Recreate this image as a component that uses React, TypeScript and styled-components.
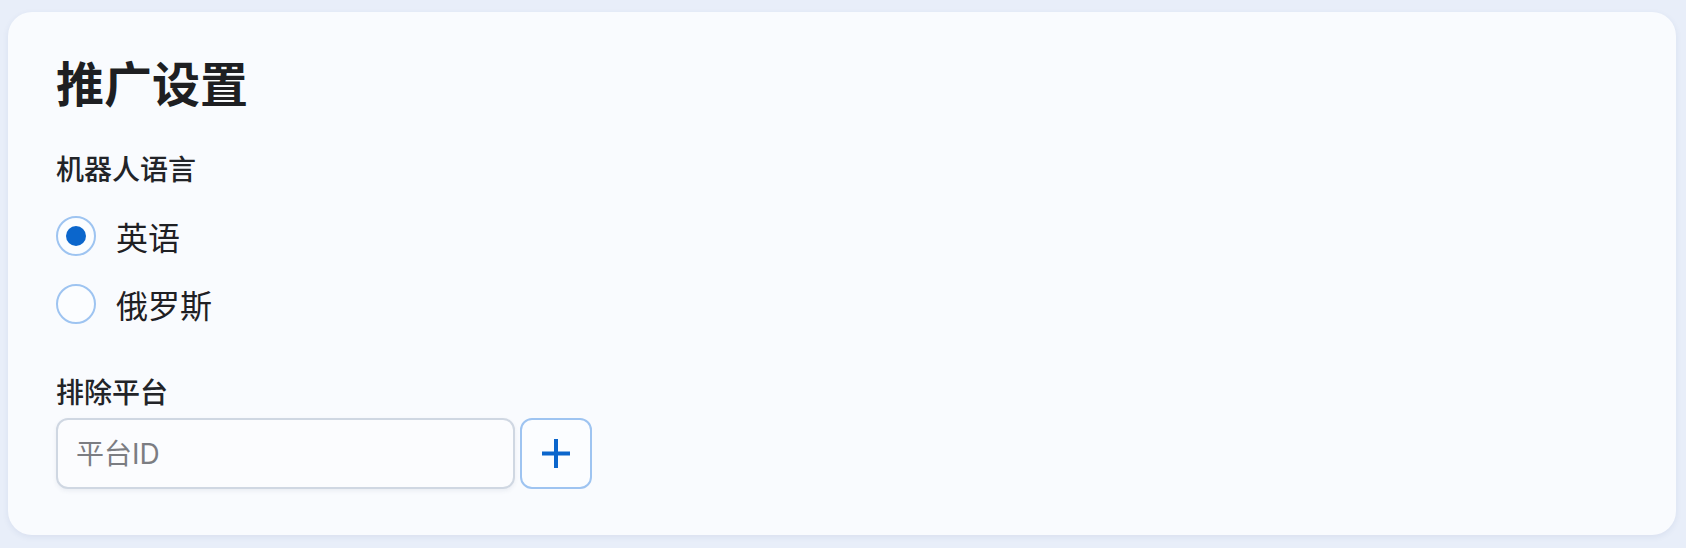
import React, { useState } from 'react'
import styled, { createGlobalStyle } from 'styled-components'

const GlobalStyle = createGlobalStyle`
  html, body {
    margin: 0;
    padding: 0;
    background: #e8eef9;
    font-family: "Noto Sans CJK SC", "Noto Sans", sans-serif;
  }
`

const Page = styled.div`
  padding: 12px 10px 13px 8px;
  min-height: 100vh;
  box-sizing: border-box;
`

const Card = styled.section`
  background: #f9fbfe;
  border-radius: 24px;
  padding: 40px 48px 46px;
  box-shadow: 0 2px 6px rgba(40, 70, 130, 0.08);
  display: flex;
  flex-direction: column;
`

const Title = styled.h1`
  margin: 0 0 40px;
  font-size: 48px;
  line-height: 58px;
  font-weight: 700;
  color: #1e1f22;
`

const Label = styled.div<{ $gap?: number }>`
  font-size: 28px;
  line-height: 36px;
  font-weight: 500;
  color: #222428;
  margin-bottom: ${p => p.$gap ?? 0}px;
`

const RadioGroup = styled.div`
  display: flex;
  flex-direction: column;
  gap: 28px;
  margin-bottom: 49px;
`

const RadioRow = styled.label`
  display: flex;
  align-items: center;
  gap: 20px;
  cursor: pointer;
  font-size: 32px;
  line-height: 40px;
  color: #1f2024;
`

const Circle = styled.span<{ $on: boolean }>`
  width: 40px;
  height: 40px;
  box-sizing: border-box;
  border-radius: 50%;
  border: 2px solid #9ec4f1;
  background: #fbfdff;
  display: flex;
  align-items: center;
  justify-content: center;

  &::after {
    content: '';
    width: 20px;
    height: 20px;
    border-radius: 50%;
    background: #0b66cc;
    display: ${p => (p.$on ? 'block' : 'none')};
  }
`

const InputRow = styled.div`
  display: flex;
  gap: 5px;
`

const Input = styled.input`
  width: 459px;
  height: 71px;
  box-sizing: border-box;
  border: 2px solid #cfd7e2;
  border-radius: 12px;
  background: #fbfcfe;
  box-shadow: 0 2px 4px rgba(60, 80, 120, 0.08);
  padding: 0 18px;
  font-family: Inter, "Noto Sans CJK SC", "Noto Sans", sans-serif;
  font-size: 28px;
  color: #222;
  outline: none;

  &::placeholder {
    color: #7b7d82;
  }
`

const AddButton = styled.button`
  width: 72px;
  height: 71px;
  box-sizing: border-box;
  border: 2px solid #9ec4f1;
  border-radius: 12px;
  background: #fbfdff;
  display: flex;
  align-items: center;
  justify-content: center;
  padding: 0;
  cursor: pointer;
`

const languages = ['英语', '俄罗斯']

export default function App() {
  const [lang, setLang] = useState('英语')

  return (
    <Page>
      <GlobalStyle />
      <Card>
        <Title>推广设置</Title>
        <Label $gap={30}>机器人语言</Label>
        <RadioGroup>
          {languages.map(l => (
            <RadioRow key={l} onClick={() => setLang(l)}>
              <Circle $on={lang === l} />
              {l}
            </RadioRow>
          ))}
        </RadioGroup>
        <Label $gap={9}>排除平台</Label>
        <InputRow>
          <Input placeholder="平台ID" />
          <AddButton aria-label="add">
            <svg width="28" height="29" viewBox="0 0 28 29">
              <path d="M14 0v29M0 14.5h28" stroke="#0b66cc" strokeWidth="4" />
            </svg>
          </AddButton>
        </InputRow>
      </Card>
    </Page>
  )
}
